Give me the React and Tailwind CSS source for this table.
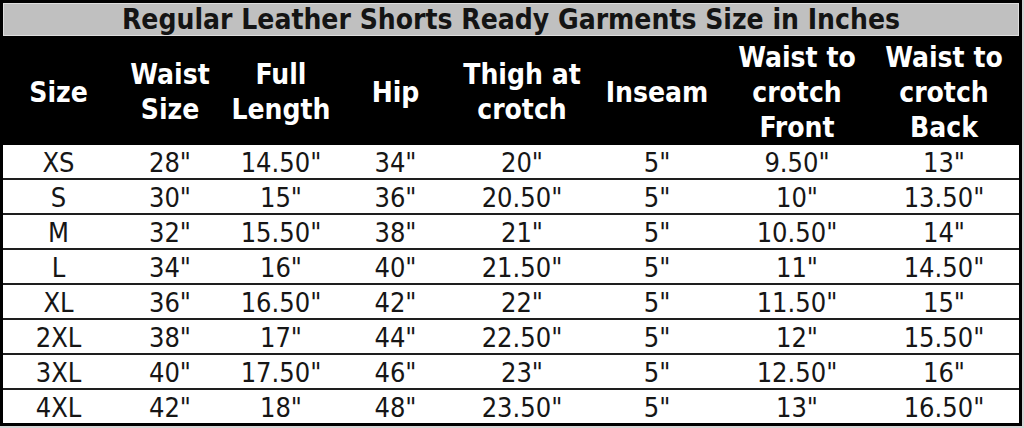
import React from 'react';

const headers = [
  ['Size'],
  ['Waist', 'Size'],
  ['Full', 'Length'],
  ['Hip'],
  ['Thigh at', 'crotch'],
  ['Inseam'],
  ['Waist to', 'crotch', 'Front'],
  ['Waist to', 'crotch', 'Back'],
];

const rows = [
  ['XS', '28"', '14.50"', '34"', '20"', '5"', '9.50"', '13"'],
  ['S', '30"', '15"', '36"', '20.50"', '5"', '10"', '13.50"'],
  ['M', '32"', '15.50"', '38"', '21"', '5"', '10.50"', '14"'],
  ['L', '34"', '16"', '40"', '21.50"', '5"', '11"', '14.50"'],
  ['XL', '36"', '16.50"', '42"', '22"', '5"', '11.50"', '15"'],
  ['2XL', '38"', '17"', '44"', '22.50"', '5"', '12"', '15.50"'],
  ['3XL', '40"', '17.50"', '46"', '23"', '5"', '12.50"', '16"'],
  ['4XL', '42"', '18"', '48"', '23.50"', '5"', '13"', '16.50"'],
];

const cols = 'grid grid-cols-[111px_112px_110px_119px_134px_136px_144px_150px]';

export default function App() {
  return (
    <div className="w-[1024px] h-[428px] bg-[#d4d4d4] font-['DejaVu_Sans_Condensed','DejaVu_Sans',sans-serif] font-stretch-condensed">
      <div className="w-[1022px] h-[426px] border-[3px] border-black bg-black flex flex-col">
        {/* Title */}
        <div className="h-[33px] bg-[#c0c0c0] border border-[#dedede] flex items-center justify-center pt-[1px] text-[28px] font-bold text-[#141414] leading-none">
          Regular Leather Shorts Ready Garments Size in Inches
        </div>

        {/* Header */}
        <div className={`${cols} h-[109px] bg-black text-white font-bold text-[28px] leading-[35px] pt-[3px]`}>
          {headers.map((lines, i) => (
            <div key={i} className="flex flex-col items-center justify-center text-center whitespace-nowrap">
              {lines.map((l) => (
                <span key={l}>{l}</span>
              ))}
            </div>
          ))}
        </div>

        {/* Body */}
        <div className="bg-white flex-1 flex flex-col">
          {rows.map((row, r) => (
            <div
              key={row[0]}
              className={`${cols} ${r < rows.length - 1 ? 'h-[35px] border-b-2 border-[#1e1e1e]' : 'h-[33px]'} pt-[2px] text-[27px] text-[#161616]`}
            >
              {row.map((v, c) => (
                <div key={c} className="flex items-center justify-center leading-none">
                  {v}
                </div>
              ))}
            </div>
          ))}
        </div>
      </div>
    </div>
  );
}
